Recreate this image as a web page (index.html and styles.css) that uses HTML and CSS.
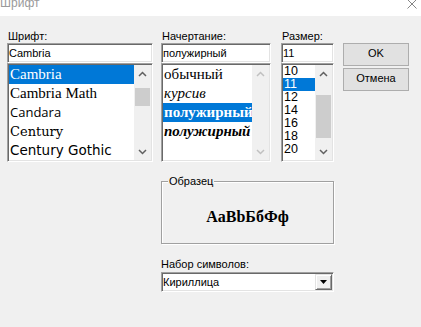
FILE: index.html
```html
<!DOCTYPE html>
<html>
<head>
<meta charset="utf-8">
<title>Шрифт</title>
<link rel="stylesheet" href="styles.css">
</head>
<body>
<div class="titlebar">
  <span class="title">Шрифт</span>
  <svg class="close" width="10" height="10" viewBox="0 0 10 10"><path d="M0.5 0.5L9.5 9.5M9.5 0.5L0.5 9.5"/></svg>
</div>
<div class="dialog">
  <div class="top">
    <div class="col col-font">
      <div class="label">Шрифт:</div>
      <div class="sunken field">Cambria</div>
      <div class="sunken listbox">
        <ul class="items">
          <li class="row f-cambria sel">Cambria</li>
          <li class="row f-cambria">Cambria Math</li>
          <li class="row f-candara">Candara</li>
          <li class="row f-century">Century</li>
          <li class="row f-gothic">Century Gothic</li>
        </ul>
        <div class="scrollbar">
          <div class="sb-btn"><svg width="9" height="6" viewBox="0 0 9 6"><path d="M1 5L4.5 1.5L8 5"/></svg></div>
          <div class="sb-track"><div class="thumb thumb-font"></div></div>
          <div class="sb-btn"><svg width="9" height="6" viewBox="0 0 9 6"><path d="M1 1L4.5 4.5L8 1"/></svg></div>
        </div>
      </div>
    </div>
    <div class="col col-style">
      <div class="label">Начертание:</div>
      <div class="sunken field">полужирный</div>
      <div class="sunken listbox">
        <ul class="items">
          <li class="row f-cambria">обычный</li>
          <li class="row f-cambria italic">курсив</li>
          <li class="row f-cambria bold sel">полужирный</li>
          <li class="row f-cambria bold italic">полужирный</li>
        </ul>
        <div class="scrollbar disabled">
          <div class="sb-btn"><svg width="9" height="6" viewBox="0 0 9 6"><path d="M1 5L4.5 1.5L8 5"/></svg></div>
          <div class="sb-track"></div>
          <div class="sb-btn"><svg width="9" height="6" viewBox="0 0 9 6"><path d="M1 1L4.5 4.5L8 1"/></svg></div>
        </div>
      </div>
    </div>
    <div class="col col-size">
      <div class="label">Размер:</div>
      <div class="sunken field">11</div>
      <div class="sunken listbox">
        <ul class="items">
          <li class="row-size">10</li>
          <li class="row-size sel">11</li>
          <li class="row-size">12</li>
          <li class="row-size">14</li>
          <li class="row-size">16</li>
          <li class="row-size">18</li>
          <li class="row-size">20</li>
        </ul>
        <div class="scrollbar">
          <div class="sb-btn"><svg width="9" height="6" viewBox="0 0 9 6"><path d="M1 5L4.5 1.5L8 5"/></svg></div>
          <div class="sb-track"><div class="thumb thumb-size"></div></div>
          <div class="sb-btn"><svg width="9" height="6" viewBox="0 0 9 6"><path d="M1 1L4.5 4.5L8 1"/></svg></div>
        </div>
      </div>
    </div>
    <div class="buttons">
      <div class="btn">OK</div>
      <div class="btn">Отмена</div>
    </div>
  </div>
  <div class="lower">
    <div class="group">
      <div class="legend">Образец</div>
      <div class="sample">AaBbБбФф</div>
    </div>
    <div class="label combo-label">Набор символов:</div>
    <div class="sunken combo">
      <span class="combo-text">Кириллица</span>
      <span class="drop"><svg width="7" height="4" viewBox="0 0 7 4"><path d="M0 0H7L3.5 4Z"/></svg></span>
    </div>
  </div>
</div>
</body>
</html>
```
FILE: styles.css
```css
* { box-sizing: border-box; }
html, body { margin: 0; padding: 0; }
body {
  width: 421px;
  height: 327px;
  background: #f0f0f0;
  font-family: "Liberation Sans", Arial, sans-serif;
  font-size: 11px;
  color: #000;
  overflow: hidden;
}
.titlebar {
  height: 16px;
  background: #fff;
  display: flex;
  justify-content: space-between;
  align-items: flex-start;
  overflow: hidden;
}
.title {
  font-size: 12px;
  line-height: 12px;
  margin-top: -3px;
  color: #9a9a9a;
}
.close {
  margin-top: -1px;
  margin-right: 4px;
  fill: none;
  stroke: #858585;
  stroke-width: 1;
}
.dialog { padding: 14px 0 0 7px; }
.top { display: flex; }
.col-font { width: 146px; }
.col-style { width: 110px; margin-left: 8px; }
.col-size { width: 53px; margin-left: 10px; }
.buttons {
  width: 66px;
  margin-left: 9px;
  padding-top: 13px;
  display: flex;
  flex-direction: column;
  gap: 2px;
}
.label {
  height: 13px;
  line-height: 13px;
  padding-left: 1px;
  white-space: nowrap;
}
.sunken {
  background: #fff;
  border: 1px solid;
  border-color: #a0a0a0 #fff #fff #a0a0a0;
  box-shadow: inset 1px 1px 0 #696969, inset -1px -1px 0 #e3e3e3;
  padding: 1px;
}
.field {
  height: 20px;
  line-height: 16px;
  white-space: nowrap;
  overflow: hidden;
}
.listbox {
  height: 99px;
  display: flex;
}
.items {
  list-style: none;
  margin: 0;
  padding: 0;
  flex: 1;
  min-width: 0;
  overflow: hidden;
}
.row {
  height: 19px;
  line-height: 19px;
  padding-left: 1px;
  white-space: nowrap;
}
.row-size {
  height: 13px;
  line-height: 13px;
  font-size: 12.5px;
  padding-left: 1px;
}
.sel { background: #0078d7; color: #fff; }
.f-cambria { font-family: "Liberation Serif", "Times New Roman", serif; font-size: 15px; }
.f-candara { font-family: "Open Sans", sans-serif; font-size: 13px; }
.f-century { font-family: "DejaVu Serif", serif; font-size: 13px; }
.f-gothic { font-family: "DejaVu Sans", sans-serif; font-size: 13.5px; }
.italic { font-style: italic; }
.bold { font-weight: bold; }
.scrollbar {
  width: 17px;
  background: #f0f0f0;
  display: flex;
  flex-direction: column;
}
.sb-btn {
  height: 17px;
  display: flex;
  align-items: center;
  justify-content: center;
}
.sb-btn svg { fill: none; stroke: #606060; stroke-width: 1.5; }
.disabled .sb-btn svg { stroke: #c0c0c0; }
.sb-track { flex: 1; padding: 0 1px; }
.thumb { background: #cdcdcd; }
.thumb-font { margin-top: 6px; height: 18px; }
.thumb-size { margin-top: 13px; height: 43px; }
.btn {
  height: 23px;
  background: #e1e1e1;
  border: 1px solid #adadad;
  text-align: center;
  line-height: 19px;
}
.lower { margin-left: 154px; width: 173px; }
.group {
  margin-top: 19px;
  height: 63px;
  border: 1px solid #a0a0a0;
  box-shadow: 1px 1px 0 #fff, inset 1px 1px 0 #fff;
}
.legend {
  display: table;
  margin: -7px 0 0 6px;
  padding: 0 1px;
  background: #f0f0f0;
  line-height: 13px;
}
.sample {
  margin-top: 19px;
  text-align: center;
  font-family: "Liberation Serif", "Times New Roman", serif;
  font-weight: bold;
  font-size: 16px;
  line-height: 20px;
}
.combo-label { margin-top: 14px; padding-left: 0; }
.combo {
  margin-top: 1px;
  height: 20px;
  display: flex;
  align-items: center;
}
.combo-text { flex: 1; line-height: 16px; }
.drop {
  width: 17px;
  height: 16px;
  background: #f0f0f0;
  border: 1px solid;
  border-color: #e3e3e3 #696969 #696969 #e3e3e3;
  box-shadow: inset 1px 1px 0 #fff, inset -1px -1px 0 #a0a0a0;
  display: flex;
  align-items: center;
  justify-content: center;
}
.drop svg { fill: #000; }
```
